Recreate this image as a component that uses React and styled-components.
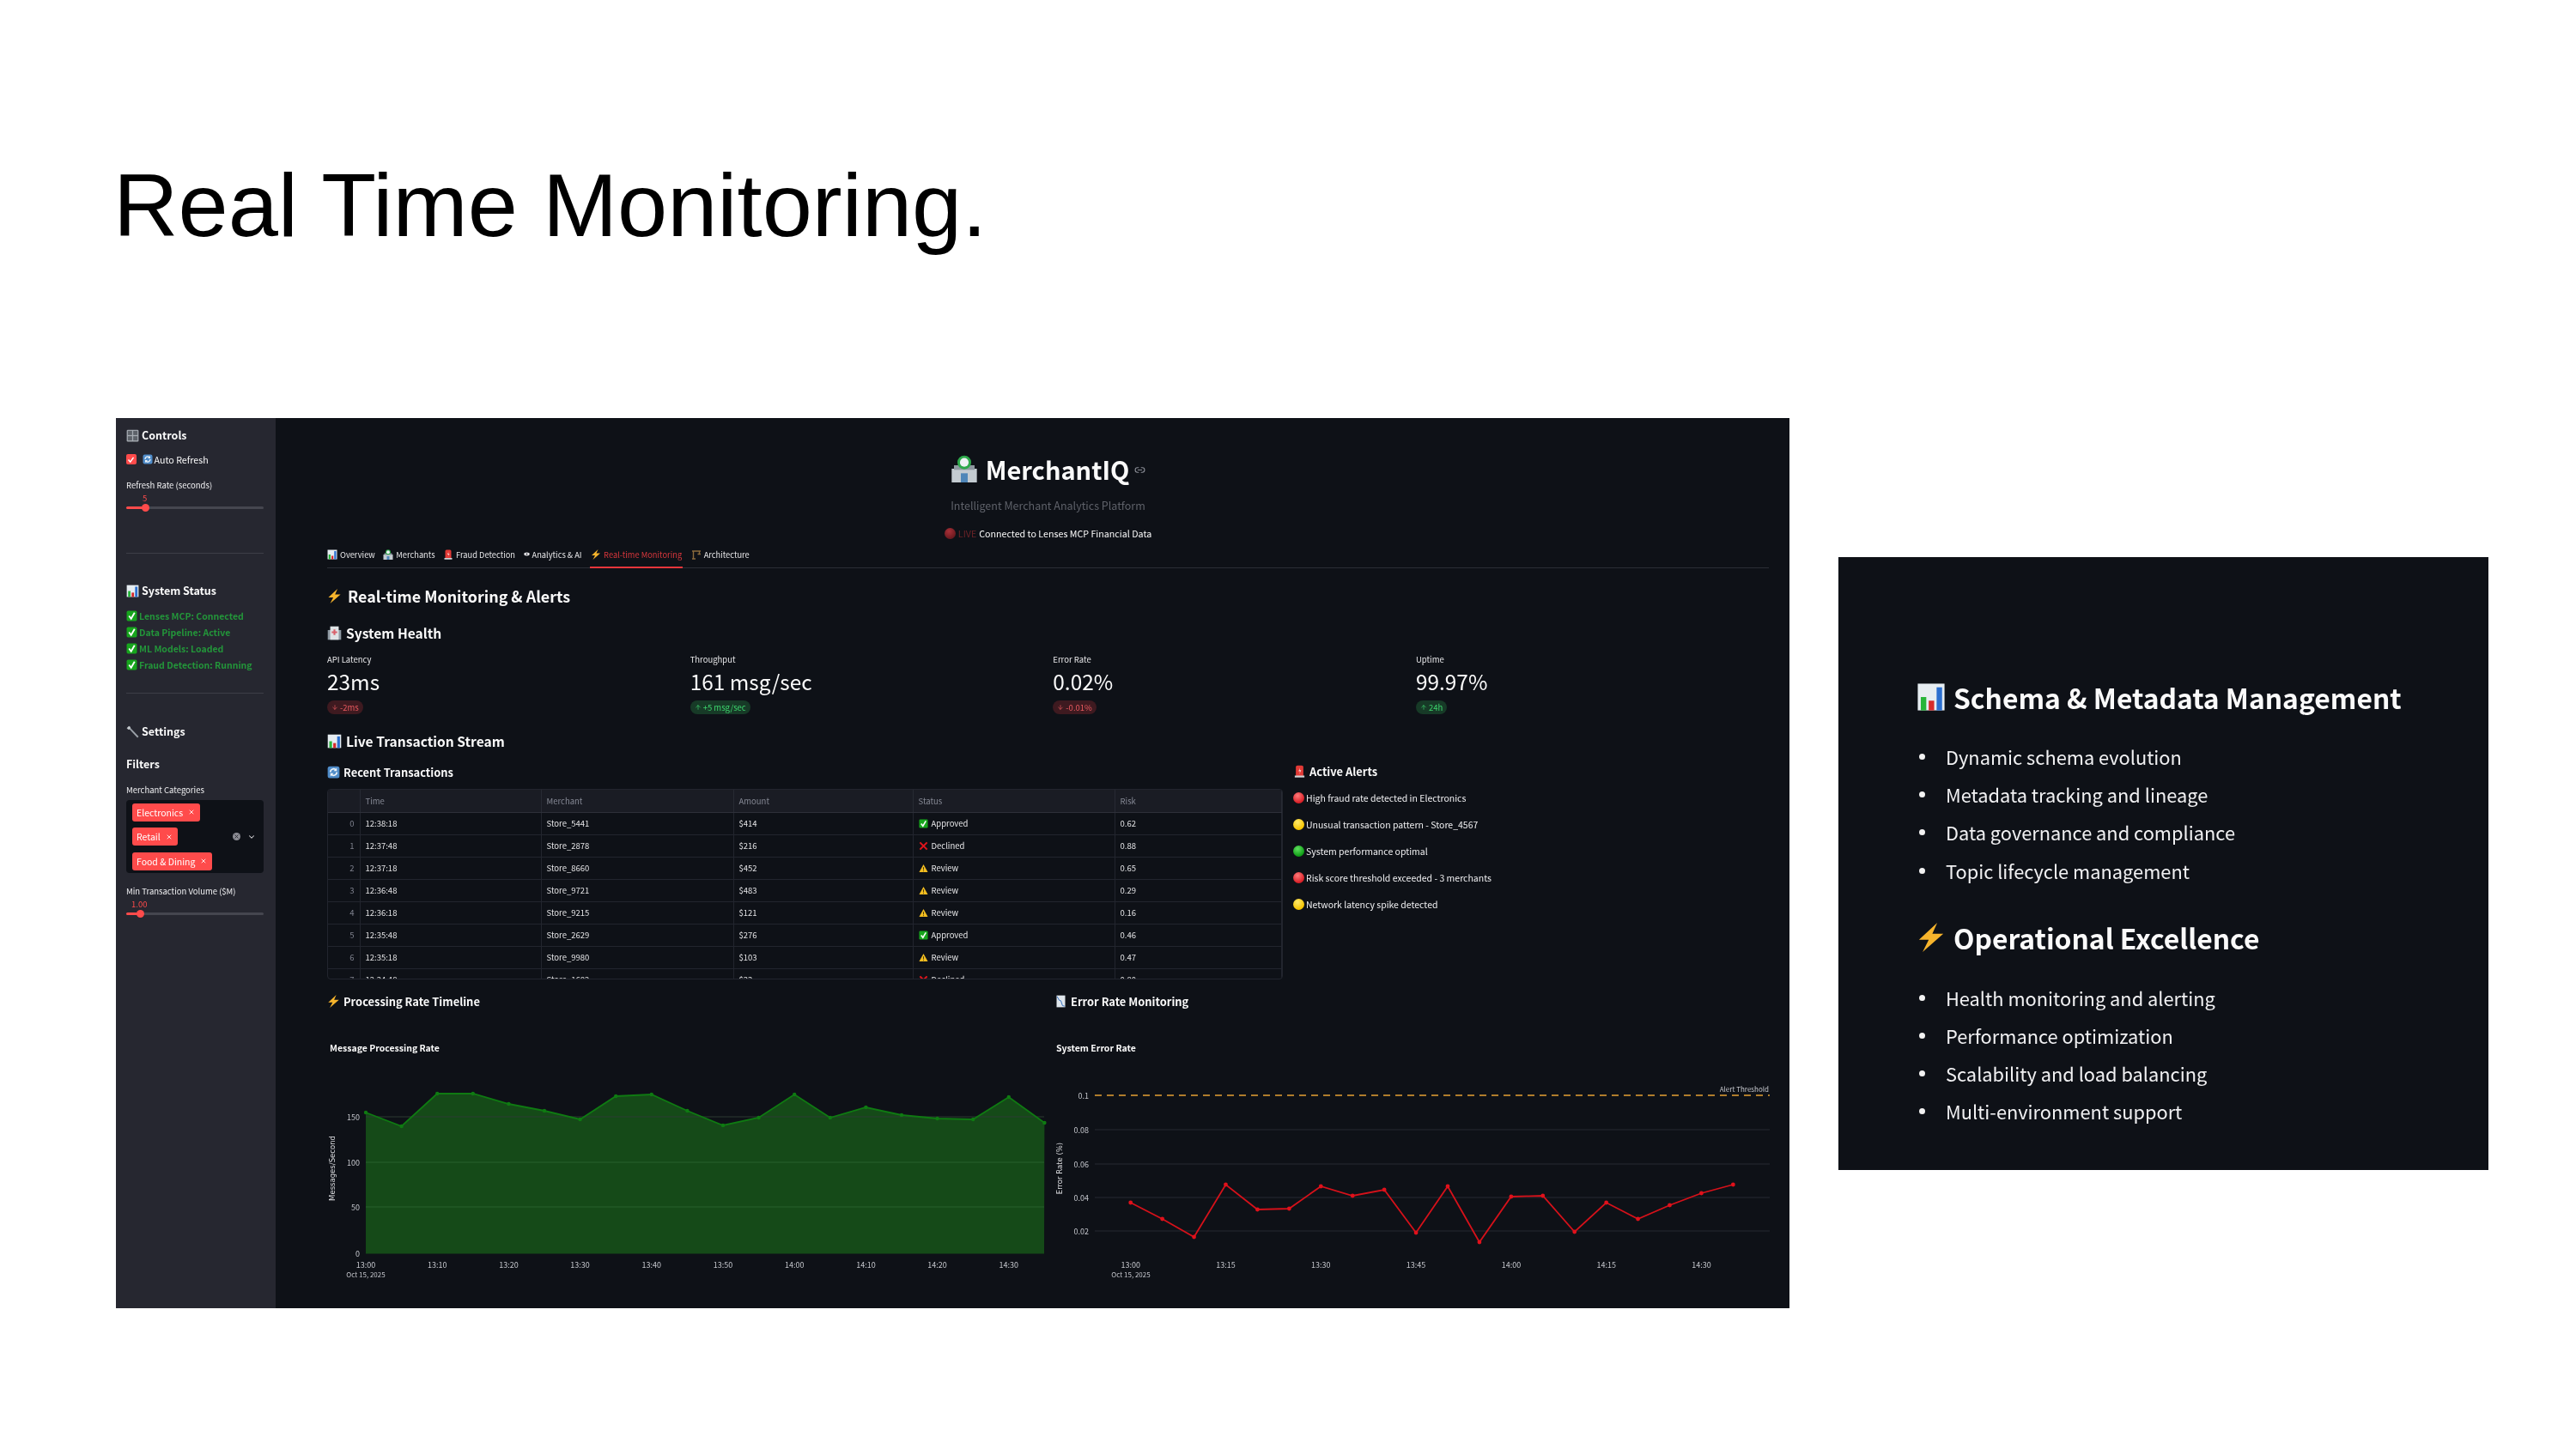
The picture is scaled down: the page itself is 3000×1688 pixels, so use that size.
import React from "react";
import styled, { createGlobalStyle } from "styled-components";
import { ArrowDown, ArrowUp, ChevronDown, Link2, X } from "lucide-react";

const UI_FONT = `"Noto Sans CJK SC", "Noto Sans", sans-serif`;

const GlobalStyle = createGlobalStyle`
  html, body {
    margin: 0;
    padding: 0;
    background: #fff;
  }
  * {
    box-sizing: border-box;
  }
`;

const Slide = styled.div`
  width: 3000px;
  height: 1688px;
  background: #fff;
  padding-top: 179px;
  overflow: hidden;
`;

const SlideTitle = styled.h1`
  margin: 0;
  padding-left: 132px;
  height: 120px;
  font: 400 104.6px/120px "Liberation Sans", Arial, sans-serif;
  color: #000;
`;

const Content = styled.div`
  display: flex;
  align-items: center;
  gap: 57px;
  margin-top: 188px;
  padding-left: 135px;
`;

const Shot = styled.div`
  display: flex;
  flex-shrink: 0;
  width: 1949px;
  height: 1037px;
  background: #0e1117;
  color: #fafafa;
  font-family: ${UI_FONT};
  overflow: hidden;
  filter: blur(0.35px);
`;

const Sidebar = styled.aside`
  flex-shrink: 0;
  width: 186px;
  padding: 12px 14px 0 12px;
  background: #262730;
`;

const SideHeading = styled.div`
  display: flex;
  align-items: center;
  gap: 3px;
  height: 16px;
  margin-top: ${({ $top }) => $top || 0}px;
  font-size: 12.5px;
  font-weight: 700;
  line-height: 16px;
`;

const CheckRow = styled.div`
  display: flex;
  align-items: center;
  gap: 7px;
  height: 16px;
  margin-top: 12px;
  font-size: 10.7px;
`;

const CheckBox = styled.span`
  display: flex;
  align-items: center;
  justify-content: center;
  width: 11.5px;
  height: 11.5px;
  border-radius: 2px;
  background: #ff4b4b;
  color: #fff;
`;

const InlineEmoji = styled.span`
  display: flex;
  align-items: center;
  gap: 2px;
`;

const FieldLabel = styled.div`
  height: 14px;
  margin-top: ${({ $top }) => $top || 0}px;
  font-size: 9.5px;
  line-height: 14px;
  color: #f0f0f2;
`;

const SliderValue = styled.div`
  margin-top: 1px;
  height: 14px;
  padding-left: ${({ $left }) => $left}px;
  font-size: 9.5px;
  line-height: 14px;
  color: #ff4b4b;
`;

const SliderTrack = styled.div`
  position: relative;
  height: 3px;
  margin-top: 3px;
  border-radius: 2px;
  background: linear-gradient(
    to right,
    #ff4b4b ${({ $pos }) => $pos}px,
    #45464f ${({ $pos }) => $pos}px
  );
`;

const SliderThumb = styled.span`
  position: absolute;
  top: -3px;
  left: ${({ $pos }) => $pos - 4.5}px;
  width: 9px;
  height: 9px;
  border-radius: 50%;
  background: #ff4b4b;
`;

const Divider = styled.hr`
  height: 1px;
  margin: ${({ $top }) => $top}px 0 0;
  border: 0;
  background: #3d3e47;
`;

const StatusList = styled.div`
  display: flex;
  flex-direction: column;
  margin-top: 12px;
`;

const StatusLine = styled.div`
  display: flex;
  align-items: center;
  gap: 2px;
  height: 19px;
  font-size: 10.5px;
  font-weight: 700;
  color: #23963a;
`;

const MultiSelect = styled.div`
  display: flex;
  align-items: center;
  justify-content: space-between;
  height: 85px;
  margin-top: 5px;
  padding: 0 9px 0 7px;
  border-radius: 4px;
  background: #0e1117;
`;

const TagColumn = styled.div`
  display: flex;
  flex-direction: column;
  align-items: flex-start;
  gap: 7.5px;
`;

const Tag = styled.span`
  display: flex;
  align-items: center;
  gap: 6px;
  height: 21px;
  padding: 0 6px 0 5px;
  border-radius: 3px;
  background: #ff4b4b;
  color: #fff;
  font-size: 10.5px;
`;

const SelectControls = styled.div`
  display: flex;
  align-items: center;
  gap: 8px;
  color: #d8d8dc;
`;

const ClearDot = styled.span`
  display: flex;
  align-items: center;
  justify-content: center;
  width: 9px;
  height: 9px;
  border-radius: 50%;
  background: #8b8c94;
  color: #26272f;
`;

const Main = styled.main`
  flex: 1;
  min-width: 0;
  padding: 38.5px 16px 0 60px;
`;

const TitleRow = styled.div`
  display: flex;
  align-items: center;
  justify-content: center;
  gap: 9px;
  height: 40px;
  margin-right: 8px;
  font-size: 29px;
  font-weight: 700;
  line-height: 40px;
`;

const LinkMark = styled.span`
  display: flex;
  margin-left: -3px;
  margin-top: 4px;
  color: #8a8d96;
`;

const Subtitle = styled.div`
  height: 16px;
  margin: 15.5px 8px 0 0;
  font-size: 12.5px;
  line-height: 16px;
  text-align: center;
  color: #5e6169;
`;

const LiveRow = styled.div`
  display: flex;
  align-items: center;
  justify-content: center;
  gap: 3px;
  height: 16px;
  margin: 16px 8px 0 0;
  font-size: 10.7px;
`;

const LiveWord = styled.span`
  color: #6b2327;
`;

const Tabs = styled.nav`
  display: flex;
  gap: 9.5px;
  height: 26px;
  margin: 7px 8px 0 0;
  border-bottom: 1px solid #2b2e36;
`;

const Tab = styled.div`
  display: flex;
  align-items: center;
  gap: 3px;
  height: 26px;
  padding: 0 ${({ $active }) => ($active ? "1px" : "0")} 4.5px;
  border-bottom: 2px solid ${({ $active }) => ($active ? "#e8363b" : "transparent")};
  color: ${({ $active }) => ($active ? "#d9373c" : "#e6e6e8")};
  font-size: 9.3px;
  white-space: nowrap;
`;

const Heading = styled.h2`
  display: flex;
  align-items: center;
  gap: 7px;
  height: 24px;
  margin: ${({ $top }) => $top}px 0 0;
  font-size: 17.9px;
  font-weight: 700;
`;

const SubHeading = styled.h3`
  display: flex;
  align-items: center;
  gap: 5px;
  height: 22px;
  margin: ${({ $top }) => $top}px 0 0;
  font-size: 15.6px;
  font-weight: 700;
`;

const MinorHeading = styled.h4`
  display: flex;
  align-items: center;
  gap: ${({ $gap }) => $gap || 4}px;
  height: 18px;
  margin: 0;
  font-size: 12.9px;
  font-weight: 700;
`;

const MetricGrid = styled.div`
  display: grid;
  grid-template-columns: repeat(3, 422.67px) 1fr;
  margin-top: 13px;
`;

const MetricLabel = styled.div`
  height: 14px;
  font-size: 9.5px;
  line-height: 14px;
  color: #e6e6e8;
`;

const MetricValue = styled.div`
  height: 30px;
  margin-top: 4px;
  font-size: 24.4px;
  line-height: 30px;
`;

const DeltaPill = styled.span`
  display: inline-flex;
  align-items: center;
  gap: 2px;
  height: 16px;
  margin-top: 5px;
  padding: 0 5px;
  border-radius: 8px;
  font-size: 9.5px;
  background: ${({ $up }) => ($up ? "#173a27" : "#3e1a20")};
  color: ${({ $up }) => ($up ? "#3dd56d" : "#e85a5f")};
`;

const StreamRow = styled.div`
  display: flex;
  gap: 12px;
  margin-top: 16px;
`;

const TableColumn = styled.div`
  flex-shrink: 0;
  width: 1113px;
`;

const TableFrame = styled.div`
  height: 222px;
  margin-top: 11px;
  border: 1px solid #22252e;
  border-radius: 4px;
  overflow: hidden;
`;

const DataTable = styled.table`
  width: 100%;
  border-collapse: collapse;
  table-layout: fixed;
  font-size: 9.5px;
`;

const HeadCell = styled.th`
  height: 26px;
  padding: 0 6px;
  border-right: 1px solid #272a33;
  border-bottom: 1px solid #2d3039;
  background: #1a1c24;
  color: #858894;
  font-weight: 400;
  text-align: left;
`;

const BodyCell = styled.td`
  height: 26px;
  padding: 0 6px;
  border-right: 1px solid #22252e;
  border-bottom: 1px solid #22252e;
  color: ${({ $index }) => ($index ? "#7f828e" : "#e4e4e6")};
  text-align: ${({ $index }) => ($index ? "right" : "left")};
  white-space: nowrap;
`;

const StatusCell = styled.span`
  display: flex;
  align-items: center;
  gap: 4px;
`;

const AlertColumn = styled.div`
  margin-top: -1px;
`;

const AlertList = styled.div`
  display: flex;
  flex-direction: column;
  gap: 15px;
  margin-top: 14px;
`;

const AlertLine = styled.div`
  display: flex;
  align-items: center;
  gap: 2px;
  height: 16px;
  font-size: 10.5px;
  color: #f0f0f2;
`;

const Dot = styled.span`
  width: 13px;
  height: 13px;
  border-radius: 50%;
  background: radial-gradient(circle at 40% 30%, ${({ $light }) => $light}, ${({ $color }) => $color} 70%);
`;

const ChartGrid = styled.div`
  display: grid;
  grid-template-columns: 841px 842px;
  column-gap: 6px;
  margin-top: 16px;
`;

const ChartSvg = styled.svg`
  display: block;
  width: ${({ $w }) => $w}px;
  height: 310px;
  margin-top: 24px;
  overflow: visible;
  font-family: ${UI_FONT};
`;

const Card = styled.section`
  flex-shrink: 0;
  width: 757px;
  height: 714px;
  padding: 141px 0 0 91px;
  background: #0e1117;
  color: #fafafa;
  font-family: ${UI_FONT};
  filter: blur(0.5px);
`;

const CardHeading = styled.h2`
  display: flex;
  align-items: center;
  gap: 9px;
  height: 44px;
  margin: ${({ $top }) => $top || 0}px 0 0;
  font-size: 31.8px;
  font-weight: 700;
`;

const CardList = styled.ul`
  margin: 26px 0 0;
  padding: 0 0 0 3px;
  list-style: none;
`;

const CardItem = styled.li`
  display: flex;
  align-items: center;
  gap: 24px;
  height: 44.2px;
  font-size: 21.8px;
  color: #f0f0f2;

  &::before {
    content: "";
    width: 7px;
    height: 7px;
    border-radius: 50%;
    background: #f2f2f2;
  }
`;

const GLYPHS = {
  chart: (
    <>
      <rect x="1" y="1" width="22" height="22" fill="#e6edf2" />
      <rect x="3.5" y="12" width="4.5" height="11" fill="#27b53a" />
      <rect x="10" y="15" width="4.5" height="8" fill="#d62c2c" />
      <rect x="16.5" y="4" width="4.5" height="19" fill="#2b6fd0" />
    </>
  ),
  chartDown: (
    <>
      <rect x="4" y="1" width="16" height="22" fill="#dfe6ec" />
      <path d="M5 3l4 7 3 1 3 9 4 1" fill="none" stroke="#3a74c2" strokeWidth="1.6" />
    </>
  ),
  knobs: (
    <>
      <rect x="1" y="1" width="22" height="22" rx="2" fill="#a6abb2" />
      <rect x="3" y="3" width="8" height="8" fill="#5d6269" />
      <rect x="13" y="3" width="8" height="8" fill="#5d6269" />
      <rect x="3" y="13" width="8" height="8" fill="#5d6269" />
      <rect x="13" y="13" width="8" height="8" fill="#5d6269" />
    </>
  ),
  refresh: (
    <>
      <rect x="1" y="1" width="22" height="22" rx="4" fill="#4f8cc9" />
      <path d="M6 12a6 6 0 0 1 10.5-4M18 12a6 6 0 0 1-10.5 4" fill="none" stroke="#eef4f9" strokeWidth="2.6" />
      <path d="M18 4v6h-6zM6 20v-6h6z" fill="#eef4f9" />
    </>
  ),
  check: (
    <>
      <rect x="1" y="1" width="22" height="22" rx="3" fill="#17a51d" />
      <path d="M6 12l4.5 6L18 5" fill="none" stroke="#fff" strokeWidth="3.4" />
    </>
  ),
  bolt: <path d="M17 0L2 14h8L5 24 22 9h-9l4-9z" fill="#f6b42c" />,
  hospital: (
    <>
      <rect x="1" y="7" width="22" height="16" fill="#8f9aa3" />
      <rect x="5" y="1" width="14" height="22" fill="#dfe3e6" />
      <path d="M10.500 6h3v3h3v3h-3v3h-3v-3h-3V9h3z" fill="#d9616b" />
    </>
  ),
  store: (
    <>
      <rect x="1" y="12" width="22" height="12" fill="#c3cbd1" />
      <rect x="3" y="9" width="18" height="4" fill="#8d979f" />
      <circle cx="12" cy="6.500" r="6" fill="#2da84a" />
      <circle cx="12" cy="6.500" r="3.800" fill="#eef1f4" />
      <rect x="9" y="16" width="6" height="8" fill="#4f86b8" />
    </>
  ),
  alarm: (
    <>
      <rect x="5" y="1" width="14" height="21" rx="3" fill="#e23a36" />
      <rect x="3" y="20" width="18" height="3.500" fill="#cfd3d6" />
      <path d="M13 5l-3 7h3l-2 6 4-8h-3z" fill="#fbe3e0" />
    </>
  ),
  wrench: (
    <>
      <path d="M6 5l16 17" stroke="#9ba1a8" strokeWidth="3" />
      <path d="M1 5l4-4 3 2-1 4-3 1z" fill="#c3c8cd" />
    </>
  ),
  eye: (
    <>
      <ellipse cx="12" cy="12" rx="11" ry="6.500" fill="#e9e9ec" />
      <circle cx="12" cy="12" r="3.200" fill="#3a3d45" />
    </>
  ),
  crane: (
    <path d="M2 4h20M5 4v18M2 22h8M19 4v7M15 11h7" fill="none" stroke="#8a6a3c" strokeWidth="2.800" />
  ),
  cross: <path d="M3 3l18 18M21 3L3 21" stroke="#e0141c" strokeWidth="4.500" />,
  warn: (
    <>
      <path d="M12 2l11 20H1z" fill="#f2bd20" />
      <path d="M12 9v7M12 18v2" stroke="#3b2f0a" strokeWidth="2" />
    </>
  ),
};

const Emoji = ({ name, size = 14 }) => (
  <svg width={size} height={size} viewBox="0 0 24 24" style={{ flexShrink: 0 }} aria-hidden="true">
    {GLYPHS[name]}
  </svg>
);

const TABS = [
  { icon: "chart", label: "Overview" },
  { icon: "store", label: "Merchants" },
  { icon: "alarm", label: "Fraud Detection" },
  { icon: "eye", label: "Analytics & AI" },
  { icon: "bolt", label: "Real-time Monitoring", active: true },
  { icon: "crane", label: "Architecture" },
];

const METRICS = [
  { label: "API Latency", value: "23ms", delta: "-2ms" },
  { label: "Throughput", value: "161 msg/sec", delta: "+5 msg/sec", up: true },
  { label: "Error Rate", value: "0.02%", delta: "-0.01%" },
  { label: "Uptime", value: "99.97%", delta: "24h", up: true },
];

const STATUS_ICON = { Approved: "check", Declined: "cross", Review: "warn" };

const ROWS = [
  ["12:38:18", "Store_5441", "$414", "Approved", "0.62"],
  ["12:37:48", "Store_2878", "$216", "Declined", "0.88"],
  ["12:37:18", "Store_8660", "$452", "Review", "0.65"],
  ["12:36:48", "Store_9721", "$483", "Review", "0.29"],
  ["12:36:18", "Store_9215", "$121", "Review", "0.16"],
  ["12:35:48", "Store_2629", "$276", "Approved", "0.46"],
  ["12:35:18", "Store_9980", "$103", "Review", "0.47"],
  ["12:34:48", "Store_1682", "$33", "Declined", "0.80"],
];

const ALERTS = [
  { light: "#ff7a7a", color: "#d81f26", text: "High fraud rate detected in Electronics" },
  { light: "#ffe96a", color: "#f5c400", text: "Unusual transaction pattern - Store_4567" },
  { light: "#5fe05f", color: "#0f9d16", text: "System performance optimal" },
  { light: "#ff7a7a", color: "#d81f26", text: "Risk score threshold exceeded - 3 merchants" },
  { light: "#ffe96a", color: "#f5c400", text: "Network latency spike detected" },
];

// screen y of each sample, read off the reference
const RATE_Y = [1297, 1313, 1275, 1275, 1287, 1295, 1305, 1278, 1276, 1295, 1312, 1303, 1276, 1303, 1291, 1300, 1304, 1305, 1279, 1309];
const ERROR_Y = [1402, 1421, 1442, 1381, 1410, 1409, 1383, 1394, 1387, 1437, 1383, 1448, 1395, 1394, 1436, 1402, 1421, 1405, 1391, 1381];

const ratePoints = RATE_Y.map((y, i) => [426 + i * 41.6, y]);
const errorPoints = ERROR_Y.map((y, i) => [1316.7 + i * 36.93, y]);
const toLine = (points) => points.map(([x, y]) => `${x},${y}`).join(" ");

const RATE_TICKS = ["13:00", "13:10", "13:20", "13:30", "13:40", "13:50", "14:00", "14:10", "14:20", "14:30"];
const ERROR_TICKS = ["13:00", "13:15", "13:30", "13:45", "14:00", "14:15", "14:30"];

const TICK = { fill: "#c4c6cc", fontSize: 9 };
const SMALL_TICK = { fill: "#c4c6cc", fontSize: 8 };

const RateChart = () => (
  <ChartSvg $w={841} viewBox="381 1200 841 310">
    <text x="384" y="1226" fill="#fafafa" fontSize="10.5" fontWeight="700">Message Processing Rate</text>
    <polygon points={`426,1461.500 ${toLine(ratePoints)} 1216,1461.500`} fill="#154a18" />
    <line x1="426" x2="1216" y1="1302" y2="1302" stroke="#2d3a33" />
    <line x1="426" x2="1216" y1="1355" y2="1355" stroke="#28602c" />
    <line x1="426" x2="1216" y1="1407" y2="1407" stroke="#28602c" />
    <polyline points={toLine(ratePoints)} fill="none" stroke="#0f7a12" strokeWidth="1.800" />
    {ratePoints.map(([x, y]) => (
      <circle key={x} cx={x} cy={y} r="2.200" fill="#0f7a12" />
    ))}
    {[["150", 1302], ["100", 1355], ["50", 1407], ["0", 1461]].map(([t, y]) => (
      <text key={t} x="419" y={y + 3.500} textAnchor="end" {...TICK}>{t}</text>
    ))}
    {RATE_TICKS.map((t, i) => (
      <text key={t} x={426 + i * 83.2} y="1477.500" textAnchor="middle" {...TICK}>{t}</text>
    ))}
    <text x="426" y="1488.500" textAnchor="middle" {...SMALL_TICK}>Oct 15, 2025</text>
    <text
      transform="translate(390 1362) rotate(-90)"
      textAnchor="middle"
      fill="#dcdde0"
      fontSize="8.500"
      fontFamily="DejaVu Sans, sans-serif"
    >
      Messages/Second
    </text>
  </ChartSvg>
);

const ErrorChart = () => (
  <ChartSvg $w={842} viewBox="1228 1200 842 310">
    <text x="1230" y="1226" fill="#fafafa" fontSize="10.5" fontWeight="700">System Error Rate</text>
    {[1317, 1357, 1396, 1435].map((y) => (
      <line key={y} x1="1275" x2="2061" y1={y} y2={y} stroke="#262a33" />
    ))}
    <line x1="1275" x2="2061" y1="1277" y2="1277" stroke="#e5a035" strokeWidth="1.500" strokeDasharray="8 6" />
    <text x="2060" y="1273" textAnchor="end" {...SMALL_TICK}>Alert Threshold</text>
    <polyline points={toLine(errorPoints)} fill="none" stroke="#d5111a" strokeWidth="1.800" />
    {errorPoints.map(([x, y]) => (
      <circle key={x} cx={x} cy={y} r="2.400" fill="#e0111b" />
    ))}
    {[["0.1", 1277], ["0.08", 1317], ["0.06", 1357], ["0.04", 1396], ["0.02", 1435]].map(([t, y]) => (
      <text key={t} x="1268" y={y + 3.500} textAnchor="end" {...TICK}>{t}</text>
    ))}
    {ERROR_TICKS.map((t, i) => (
      <text key={t} x={1316.7 + i * 110.8} y="1477.500" textAnchor="middle" {...TICK}>{t}</text>
    ))}
    <text x="1317" y="1488.500" textAnchor="middle" {...SMALL_TICK}>Oct 15, 2025</text>
    <text
      transform="translate(1237 1362) rotate(-90)"
      textAnchor="middle"
      fill="#dcdde0"
      fontSize="8.500"
      fontFamily="DejaVu Sans, sans-serif"
    >
      Error Rate (%)
    </text>
  </ChartSvg>
);

const Slider = ({ value, left, pos }) => (
  <>
    <SliderValue $left={left}>{value}</SliderValue>
    <SliderTrack $pos={pos}>
      <SliderThumb $pos={pos} />
    </SliderTrack>
  </>
);

const App = () => (
  <Slide>
    <GlobalStyle />
    <SlideTitle>Real Time Monitoring.</SlideTitle>
    <Content>
      <Shot>
        <Sidebar>
          <SideHeading>
            <Emoji name="knobs" size={15} />
            Controls
          </SideHeading>
          <CheckRow>
            <CheckBox>
              <svg width="9" height="9" viewBox="0 0 24 24" aria-hidden="true">
                <path d="M4 12l6 7L20 5" fill="none" stroke="currentColor" strokeWidth="4" />
              </svg>
            </CheckBox>
            <InlineEmoji>
              <Emoji name="refresh" size={12} />
              Auto Refresh
            </InlineEmoji>
          </CheckRow>
          <FieldLabel $top={15}>Refresh Rate (seconds)</FieldLabel>
          <Slider value="5" left={19} pos={22} />
          <Divider $top={51} />
          <SideHeading $top={35}>
            <Emoji name="chart" size={15} />
            System Status
          </SideHeading>
          <StatusList>
            {["Lenses MCP: Connected", "Data Pipeline: Active", "ML Models: Loaded", "Fraud Detection: Running"].map((s) => (
              <StatusLine key={s}>
                <Emoji name="check" size={13} />
                {s}
              </StatusLine>
            ))}
          </StatusList>
          <Divider $top={23} />
          <SideHeading $top={36}>
            <Emoji name="wrench" size={15} />
            Settings
          </SideHeading>
          <SideHeading $top={22}>Filters</SideHeading>
          <FieldLabel $top={15}>Merchant Categories</FieldLabel>
          <MultiSelect>
            <TagColumn>
              {["Electronics", "Retail", "Food & Dining"].map((t) => (
                <Tag key={t}>
                  {t}
                  <X size={8} strokeWidth={2.500} />
                </Tag>
              ))}
            </TagColumn>
            <SelectControls>
              <ClearDot>
                <X size={7} strokeWidth={3} />
              </ClearDot>
              <ChevronDown size={10} strokeWidth={2.500} />
            </SelectControls>
          </MultiSelect>
          <FieldLabel $top={14}>Min Transaction Volume ($M)</FieldLabel>
          <Slider value="1.00" left={6} pos={16} />
        </Sidebar>
        <Main>
          <TitleRow>
            <Emoji name="store" size={32} />
            MerchantIQ
            <LinkMark>
              <Link2 size={13} />
            </LinkMark>
          </TitleRow>
          <Subtitle>Intelligent Merchant Analytics Platform</Subtitle>
          <LiveRow>
            <Dot $light="#a83038" $color="#6d1a20" />
            <LiveWord>LIVE</LiveWord>
            Connected to Lenses MCP Financial Data
          </LiveRow>
          <Tabs>
            {TABS.map((t) => (
              <Tab key={t.label} $active={t.active}>
                <Emoji name={t.icon} size={t.icon === "eye" ? 7 : 12} />
                {t.label}
              </Tab>
            ))}
          </Tabs>
          <Heading $top={20}>
            <Emoji name="bolt" size={17} />
            Real-time Monitoring & Alerts
          </Heading>
          <SubHeading $top={20}>
            <Emoji name="hospital" size={17} />
            System Health
          </SubHeading>
          <MetricGrid>
            {METRICS.map((m) => (
              <div key={m.label}>
                <MetricLabel>{m.label}</MetricLabel>
                <MetricValue>{m.value}</MetricValue>
                <DeltaPill $up={m.up}>
                  {m.up ? <ArrowUp size={8} /> : <ArrowDown size={8} />}
                  {m.delta}
                </DeltaPill>
              </div>
            ))}
          </MetricGrid>
          <SubHeading $top={19}>
            <Emoji name="chart" size={17} />
            Live Transaction Stream
          </SubHeading>
          <StreamRow>
            <TableColumn>
              <MinorHeading>
                <Emoji name="refresh" size={15} />
                Recent Transactions
              </MinorHeading>
              <TableFrame>
                <DataTable>
                  <colgroup>
                    <col width="37" />
                    <col width="211" />
                    <col width="224" />
                    <col width="209" />
                    <col width="235" />
                    <col />
                  </colgroup>
                  <thead>
                    <tr>
                      {["", "Time", "Merchant", "Amount", "Status", "Risk"].map((h) => (
                        <HeadCell key={h}>{h}</HeadCell>
                      ))}
                    </tr>
                  </thead>
                  <tbody>
                    {ROWS.map(([time, store, amount, status, risk], i) => (
                      <tr key={time}>
                        <BodyCell $index>{i}</BodyCell>
                        <BodyCell>{time}</BodyCell>
                        <BodyCell>{store}</BodyCell>
                        <BodyCell>{amount}</BodyCell>
                        <BodyCell>
                          <StatusCell>
                            <Emoji name={STATUS_ICON[status]} size={11} />
                            {status}
                          </StatusCell>
                        </BodyCell>
                        <BodyCell>{risk}</BodyCell>
                      </tr>
                    ))}
                  </tbody>
                </DataTable>
              </TableFrame>
            </TableColumn>
            <AlertColumn>
              <MinorHeading>
                <Emoji name="alarm" size={15} />
                Active Alerts
              </MinorHeading>
              <AlertList>
                {ALERTS.map((a) => (
                  <AlertLine key={a.text}>
                    <Dot $light={a.light} $color={a.color} />
                    {a.text}
                  </AlertLine>
                ))}
              </AlertList>
            </AlertColumn>
          </StreamRow>
          <ChartGrid>
            <div>
              <MinorHeading>
                <Emoji name="bolt" size={15} />
                Processing Rate Timeline
              </MinorHeading>
              <RateChart />
            </div>
            <div>
              <MinorHeading>
                <Emoji name="chartDown" size={15} />
                Error Rate Monitoring
              </MinorHeading>
              <ErrorChart />
            </div>
          </ChartGrid>
        </Main>
      </Shot>
      <Card>
        <CardHeading>
          <Emoji name="chart" size={34} />
          Schema & Metadata Management
        </CardHeading>
        <CardList>
          {["Dynamic schema evolution", "Metadata tracking and lineage", "Data governance and compliance", "Topic lifecycle management"].map((t) => (
            <CardItem key={t}>{t}</CardItem>
          ))}
        </CardList>
        <CardHeading $top={34}>
          <Emoji name="bolt" size={34} />
          Operational Excellence
        </CardHeading>
        <CardList>
          {["Health monitoring and alerting", "Performance optimization", "Scalability and load balancing", "Multi-environment support"].map((t) => (
            <CardItem key={t}>{t}</CardItem>
          ))}
        </CardList>
      </Card>
    </Content>
  </Slide>
);

export default App;
